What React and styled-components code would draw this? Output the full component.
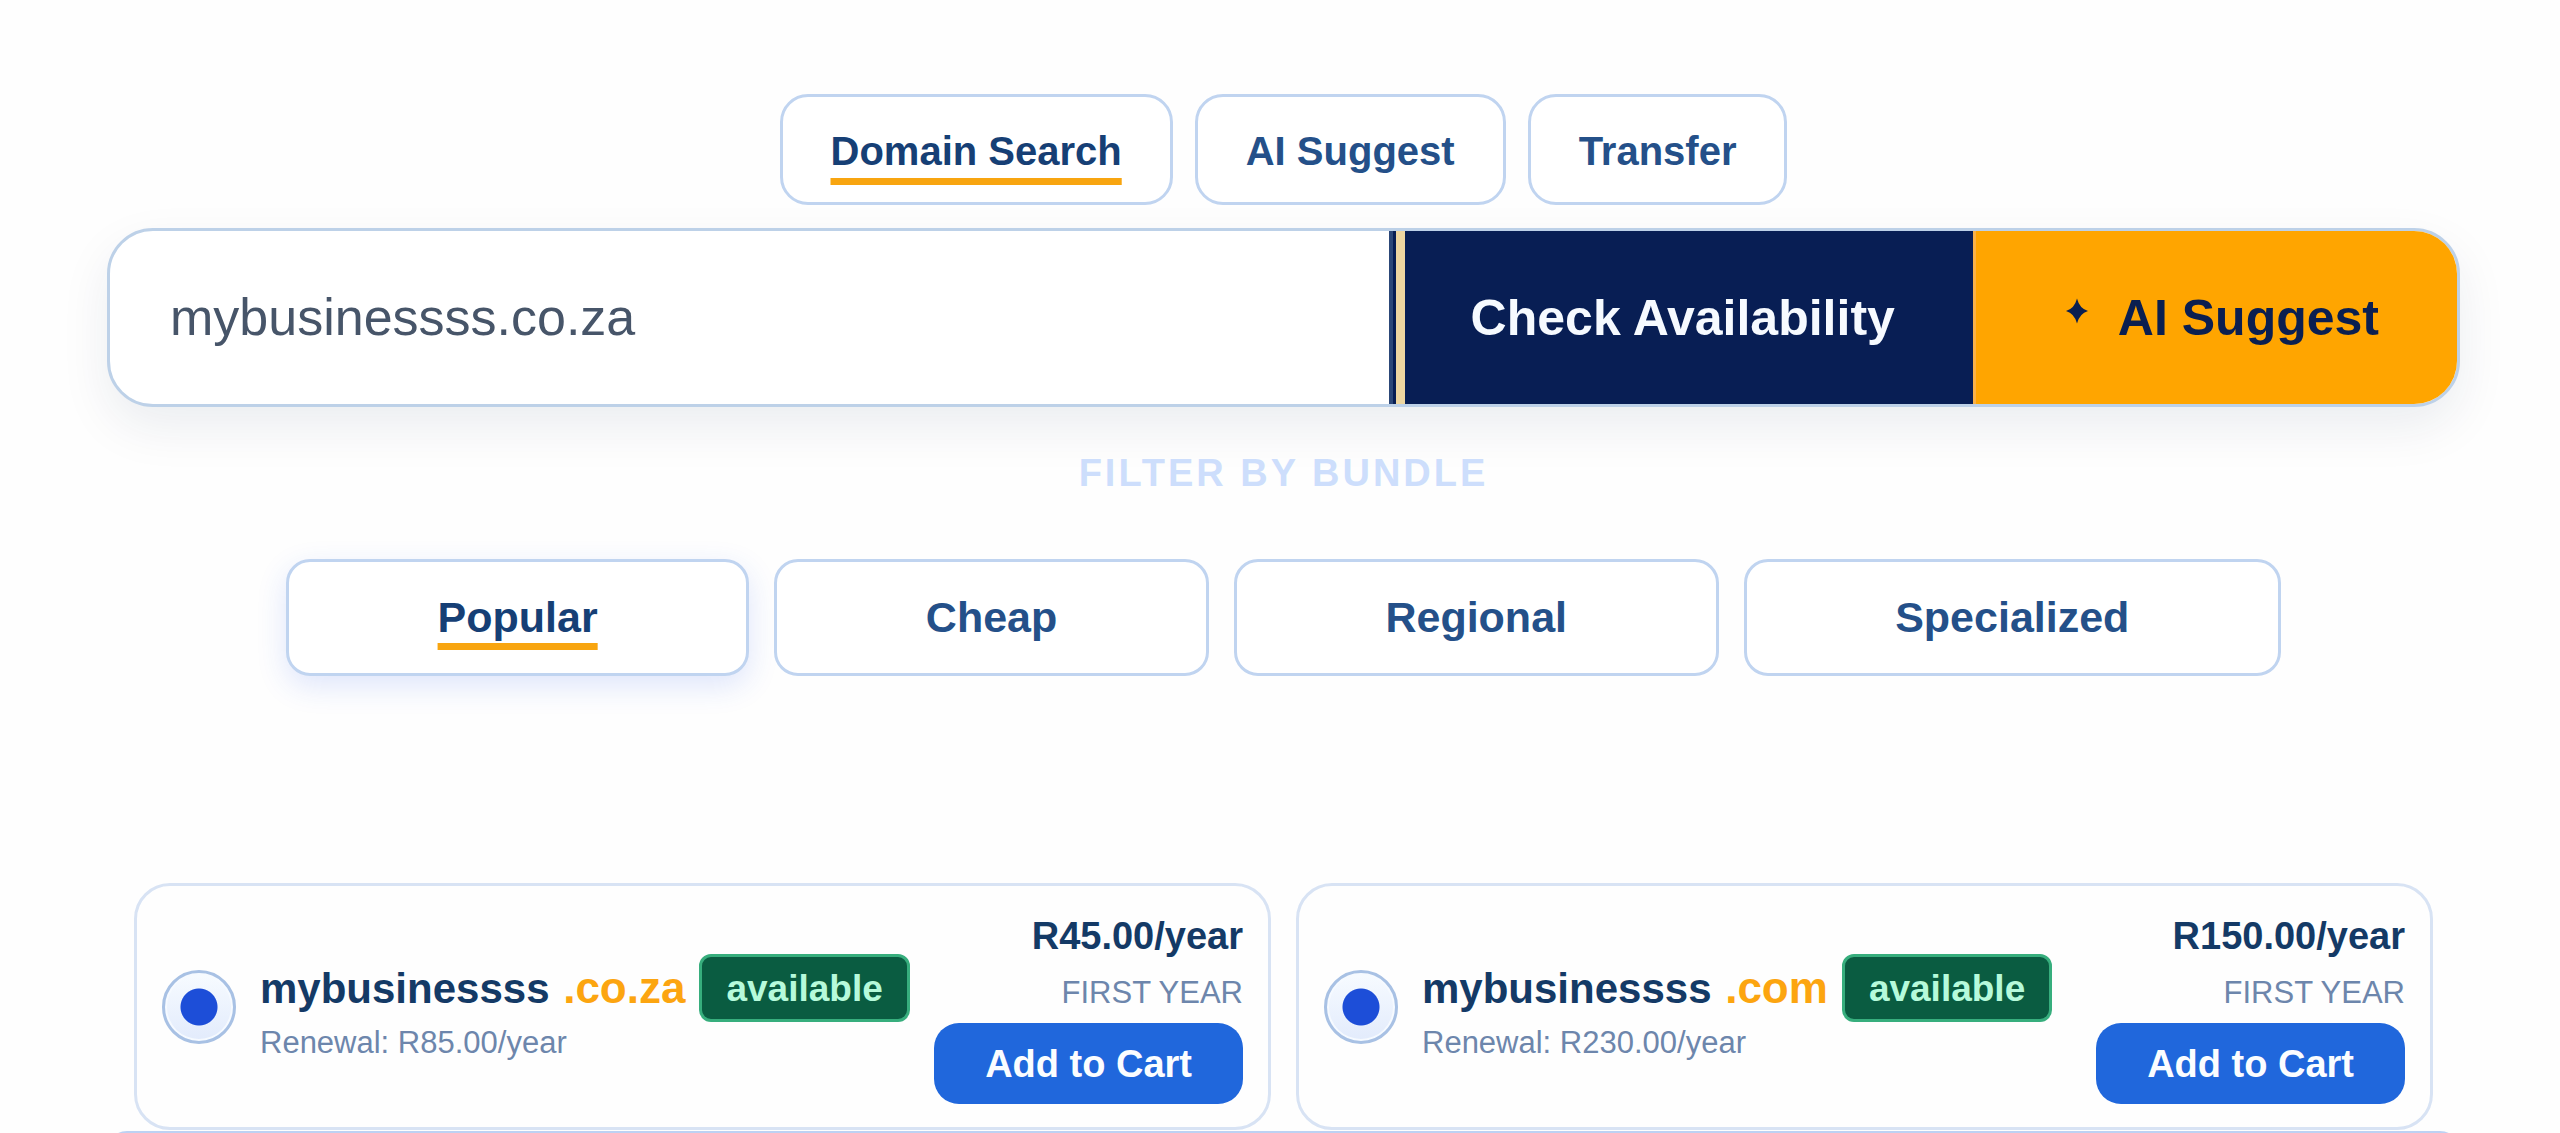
import React, { useState } from "react";
import styled, { createGlobalStyle } from "styled-components";

const GlobalStyle = createGlobalStyle`
  *, *::before, *::after { box-sizing: border-box; }
  body {
    margin: 0;
    background: #fefefe;
    font-family: "Liberation Sans", Arial, Helvetica, sans-serif;
  }
  button, input { font-family: inherit; margin: 0; }
  button { cursor: pointer; }
`;

const Page = styled.main`
  height: 100vh;
  overflow: hidden;
  padding: 94px 100px 0 107px;
  display: flex;
  flex-direction: column;
`;

const Tabs = styled.nav`
  flex: none;
  display: flex;
  justify-content: center;
  gap: 22px;
  margin-bottom: 23px;
`;

const Pill = styled.button`
  border: 3px solid #c0d4f0;
  background: #fff;
  font-weight: 700;
  color: ${(p) => (p.$active ? "#163f75" : "#245089")};
  text-decoration-line: ${(p) => (p.$active ? "underline" : "none")};
  text-decoration-color: #f8a510;
  text-decoration-thickness: 7px;
  text-decoration-skip-ink: none;
`;

const Tab = styled(Pill)`
  height: 111px;
  padding: 3px 48px 0;
  border-radius: 28px;
  font-size: 40px;
  text-underline-offset: 13px;
`;

const SearchBar = styled.form`
  flex: none;
  display: flex;
  height: 179px;
  border: 3px solid #bdd1e8;
  border-radius: 46px;
  background: #fff;
  overflow: hidden;
  box-shadow: 0 20px 50px rgba(15, 33, 72, 0.08);
`;

const SearchInput = styled.input`
  flex: 1;
  min-width: 0;
  border: 0;
  outline: 0;
  padding: 0 60px 2px;
  background: transparent;
  font-size: 52px;
  color: #475569;
`;

const BarButton = styled.button`
  display: flex;
  align-items: center;
  justify-content: center;
  gap: 16px;
  border: 0;
  padding: 0 78px;
  font-size: 50px;
  font-weight: 700;
  white-space: nowrap;
`;

const CheckButton = styled(BarButton)`
  border-left: 4px solid #2c4778;
  color: #f6faff;
  background: linear-gradient(
    90deg,
    #081e54 3px,
    #eed6a0 3px,
    #eed6a0 12px,
    #081e54 12px
  );
`;

const SuggestButton = styled(BarButton)`
  border-left: 3px solid #f9b148;
  color: #0b1f50;
  background: #ffa500;
`;

const FilterLabel = styled.h2`
  flex: none;
  margin: 44px 0 64px;
  text-align: center;
  font-size: 38px;
  line-height: 44px;
  font-weight: 700;
  letter-spacing: 3px;
  color: #cddefc;
  text-transform: uppercase;
`;

const Filters = styled.div`
  flex: none;
  display: flex;
  gap: 25px;
  padding: 0 179px;
`;

const FilterButton = styled(Pill)`
  flex: 1 1 auto;
  height: 117px;
  padding: 0;
  border-radius: 24px;
  font-size: 43px;
  text-underline-offset: 11px;
  box-shadow: ${(p) =>
    p.$active ? "0 10px 30px rgba(37, 89, 235, 0.15)" : "none"};
`;

const Results = styled.section`
  flex: none;
  display: grid;
  grid-template-columns: 1fr 1fr;
  gap: 25px;
  margin-top: 207px;
  padding: 0 27px;
`;

const Card = styled.article`
  display: flex;
  align-items: center;
  gap: 24px;
  padding: 23px 25px;
  border: 3px solid #d8e3f4;
  border-radius: 36px;
  background: #fefefe;
`;

const Marker = styled.input`
  appearance: none;
  flex: none;
  width: 74px;
  height: 74px;
  border: 3px solid #a8c1e4;
  border-radius: 50%;
  background: radial-gradient(circle, #1d4ed8 18px, transparent 19px),
    linear-gradient(180deg, #f7fbff, #e2ebfc);
  box-shadow: inset 0 0 0 2px #f6faff;
`;

const Details = styled.div`
  flex: 1;
  min-width: 0;
  padding-top: 2px;
`;

const NameRow = styled.div`
  display: flex;
  align-items: center;
  gap: 14px;
`;

const Name = styled.label`
  padding-top: 2px;
  font-size: 42px;
  line-height: 50px;
  font-weight: 700;
  color: #143a66;
  white-space: nowrap;
`;

const Tld = styled.span`
  margin-left: 2px;
  font-size: 44px;
  color: #fca510;
`;

const Badge = styled.span`
  height: 68px;
  padding: 0 24px;
  border: 3px solid #37ae7d;
  border-radius: 12px;
  background: #0a5c41;
  color: #b6fadb;
  font-size: 37px;
  line-height: 64px;
  font-weight: 700;
`;

const Renewal = styled.p`
  margin: 2px 0 0;
  font-size: 31px;
  line-height: 38px;
  color: #6d86ac;
`;

const Purchase = styled.div`
  display: flex;
  flex-direction: column;
  align-items: flex-end;
`;

const Price = styled.strong`
  font-size: 38px;
  line-height: 54px;
  color: #143a66;
`;

const Term = styled.span`
  font-size: 31px;
  line-height: 60px;
  color: #6d86ac;
  text-transform: uppercase;
`;

const CartButton = styled.button`
  height: 81px;
  padding: 2px 51px 0;
  border: 0;
  border-radius: 25px;
  background: #2067dc;
  color: #fbfdff;
  font-size: 38px;
  font-weight: 700;
`;

const NextPanel = styled.section`
  flex: none;
  height: 200px;
  margin-top: 1px;
  border: 3px solid #bdd1f3;
  border-radius: 20px;
`;

const tabs = ["Domain Search", "AI Suggest", "Transfer"];
const bundles = ["Popular", "Cheap", "Regional", "Specialized"];
const results = [
  { name: "mybusinessss", tld: ".co.za", price: "R45.00/year", renewal: "R85.00/year" },
  { name: "mybusinessss", tld: ".com", price: "R150.00/year", renewal: "R230.00/year" },
];

function Spark() {
  return (
    <svg width="48" height="48" viewBox="0 0 48 48" aria-hidden="true">
      <path
        d="M23 4.500 Q25.500 14.500 34 17 Q25.500 19.500 23 29.500 Q20.500 19.500 12 17 Q20.500 14.500 23 4.500 Z"
        fill="#0b1f50"
      />
    </svg>
  );
}

function Result({ name, tld, price, renewal }) {
  const id = "pick" + tld;
  return (
    <Card>
      <Marker type="checkbox" id={id} defaultChecked />
      <Details>
        <NameRow>
          <Name htmlFor={id}>
            {name} <Tld>{tld}</Tld>
          </Name>
          <Badge>available</Badge>
        </NameRow>
        <Renewal>Renewal: {renewal}</Renewal>
      </Details>
      <Purchase>
        <Price>{price}</Price>
        <Term>First year</Term>
        <CartButton type="button">Add to Cart</CartButton>
      </Purchase>
    </Card>
  );
}

export default function App() {
  const [tab, setTab] = useState(tabs[0]);
  const [bundle, setBundle] = useState(bundles[0]);
  const [query, setQuery] = useState("mybusinessss.co.za");

  return (
    <>
      <GlobalStyle />
      <Page>
        <Tabs>
          {tabs.map((t) => (
            <Tab key={t} type="button" $active={t === tab} onClick={() => setTab(t)}>
              {t}
            </Tab>
          ))}
        </Tabs>
        <SearchBar onSubmit={(e) => e.preventDefault()}>
          <SearchInput
            type="text"
            aria-label="Domain name"
            spellCheck={false}
            value={query}
            onChange={(e) => setQuery(e.target.value)}
          />
          <CheckButton type="submit">Check Availability</CheckButton>
          <SuggestButton type="button">
            <Spark />
            AI Suggest
          </SuggestButton>
        </SearchBar>
        <FilterLabel>Filter by bundle</FilterLabel>
        <Filters>
          {bundles.map((b) => (
            <FilterButton
              key={b}
              type="button"
              $active={b === bundle}
              onClick={() => setBundle(b)}
            >
              {b}
            </FilterButton>
          ))}
        </Filters>
        <Results>
          {results.map((r) => (
            <Result key={r.tld} {...r} />
          ))}
        </Results>
        <NextPanel />
      </Page>
    </>
  );
}
